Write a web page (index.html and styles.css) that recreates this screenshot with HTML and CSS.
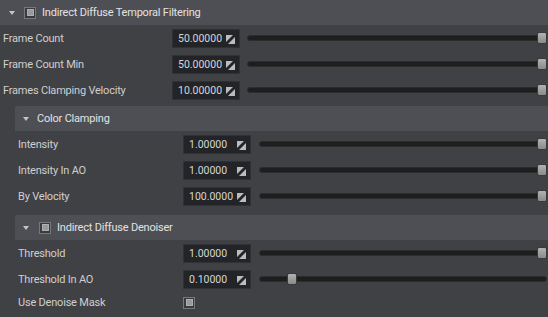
FILE: index.html
```html
<!DOCTYPE html>
<html>
<head>
<meta charset="utf-8">
<link rel="stylesheet" href="styles.css">
</head>
<body>
<div class="panel">
  <div class="hdr top">
    <span class="arrow"></span><span class="cb"><span class="cb-in"></span></span><span class="title">Indirect Diffuse Temporal Filtering</span>
  </div>
  <div class="row">
    <span class="lbl">Frame Count</span>
    <div class="num"><span class="val">50.000000</span><svg class="spin" viewBox="0 0 9 9" width="9" height="9"><path d="M0 0H7L0 7Z" fill="#bcbcbc"/><path d="M9 2V9H2Z" fill="#bcbcbc"/></svg></div>
    <div class="slider"><div class="track"></div><div class="handle" style="--v:1"></div></div>
  </div>
  <div class="row">
    <span class="lbl">Frame Count Min</span>
    <div class="num"><span class="val">50.000000</span><svg class="spin" viewBox="0 0 9 9" width="9" height="9"><path d="M0 0H7L0 7Z" fill="#bcbcbc"/><path d="M9 2V9H2Z" fill="#bcbcbc"/></svg></div>
    <div class="slider"><div class="track"></div><div class="handle" style="--v:1"></div></div>
  </div>
  <div class="row">
    <span class="lbl">Frames Clamping Velocity</span>
    <div class="num"><span class="val">10.000000</span><svg class="spin" viewBox="0 0 9 9" width="9" height="9"><path d="M0 0H7L0 7Z" fill="#bcbcbc"/><path d="M9 2V9H2Z" fill="#bcbcbc"/></svg></div>
    <div class="slider"><div class="track"></div><div class="handle" style="--v:1"></div></div>
  </div>

  <div class="group first">
    <div class="hdr sub">
      <span class="arrow"></span><span class="title">Color Clamping</span>
    </div>
    <div class="row">
      <span class="lbl">Intensity</span>
      <div class="num"><span class="val">1.00000</span><svg class="spin" viewBox="0 0 9 9" width="9" height="9"><path d="M0 0H7L0 7Z" fill="#bcbcbc"/><path d="M9 2V9H2Z" fill="#bcbcbc"/></svg></div>
      <div class="slider"><div class="track"></div><div class="handle" style="--v:1"></div></div>
    </div>
    <div class="row">
      <span class="lbl">Intensity In AO</span>
      <div class="num"><span class="val">1.00000</span><svg class="spin" viewBox="0 0 9 9" width="9" height="9"><path d="M0 0H7L0 7Z" fill="#bcbcbc"/><path d="M9 2V9H2Z" fill="#bcbcbc"/></svg></div>
      <div class="slider"><div class="track"></div><div class="handle" style="--v:1"></div></div>
    </div>
    <div class="row">
      <span class="lbl">By Velocity</span>
      <div class="num"><span class="val">100.00000</span><svg class="spin" viewBox="0 0 9 9" width="9" height="9"><path d="M0 0H7L0 7Z" fill="#bcbcbc"/><path d="M9 2V9H2Z" fill="#bcbcbc"/></svg></div>
      <div class="slider"><div class="track"></div><div class="handle" style="--v:1"></div></div>
    </div>
  </div>

  <div class="group">
    <div class="hdr sub">
      <span class="arrow"></span><span class="cb"><span class="cb-in"></span></span><span class="title">Indirect Diffuse Denoiser</span>
    </div>
    <div class="row">
      <span class="lbl">Threshold</span>
      <div class="num"><span class="val">1.00000</span><svg class="spin" viewBox="0 0 9 9" width="9" height="9"><path d="M0 0H7L0 7Z" fill="#bcbcbc"/><path d="M9 2V9H2Z" fill="#bcbcbc"/></svg></div>
      <div class="slider"><div class="track"></div><div class="handle" style="--v:1"></div></div>
    </div>
    <div class="row">
      <span class="lbl">Threshold In AO</span>
      <div class="num"><span class="val">0.10000</span><svg class="spin" viewBox="0 0 9 9" width="9" height="9"><path d="M0 0H7L0 7Z" fill="#bcbcbc"/><path d="M9 2V9H2Z" fill="#bcbcbc"/></svg></div>
      <div class="slider"><div class="track"></div><div class="handle" style="--v:0.1"></div></div>
    </div>
    <div class="row short">
      <span class="lbl">Use Denoise Mask</span>
      <span class="cb"><span class="cb-in"></span></span>
    </div>
  </div>
</div>
</body>
</html>
```

FILE: styles.css
```css
html, body {
  margin: 0;
  padding: 0;
  background: #404145;
  width: 548px;
  height: 317px;
  overflow: hidden;
}
.panel {
  font-family: Roboto, "Liberation Sans", sans-serif;
  font-size: 11px;
  letter-spacing: -0.2px;
  color: #cfcfcf;
}
.hdr {
  display: flex;
  align-items: center;
  height: 25px;
  background: #4e4f54;
  color: #e2e2e2;
}
.hdr.top {
  padding-left: 9px;
}
.hdr.top .arrow { margin-right: 9px; }
.hdr.top .cb { margin-right: 6px; }
.hdr.sub {
  margin-left: 15px;
  padding-left: 8px;
  border-radius: 2px 0 0 0;
}
.hdr.sub .arrow { margin-right: 8px; }
.hdr.sub .arrow + .cb { margin-left: 2px; margin-right: 6px; }
.arrow {
  width: 0;
  height: 0;
  border-left: 3.5px solid transparent;
  border-right: 3.5px solid transparent;
  border-top: 4px solid #c4c4c4;
  flex: none;
}
.cb {
  box-sizing: border-box;
  width: 12px;
  height: 12px;
  border: 1px solid #77787b;
  background: #3a3b3f;
  display: flex;
  align-items: center;
  justify-content: center;
  flex: none;
}
.cb-in {
  box-sizing: border-box;
  width: 7px;
  height: 7px;
  background: #999a9c;
  border: 1px solid #aeafb1;
}
.row {
  display: flex;
  align-items: center;
  height: 26px;
  padding-left: 3px;
  padding-right: 1px;
}
.lbl {
  width: 169px;
  flex: none;
  white-space: nowrap;
}
.group { margin-top: 6px; }
.group.first { margin-top: 3px; }
.group .row { padding-left: 18px; }
.group .lbl { width: 165px; }
.row.short { height: 21px; }
.num {
  box-sizing: border-box;
  width: 68px;
  height: 19px;
  flex: none;
  background: #232428;
  border: 1px solid #303135;
  display: flex;
  align-items: center;
  padding-left: 5px;
  padding-right: 4px;
  color: #d6d6d6;
}
.val {
  width: 44px;
  overflow: hidden;
  white-space: nowrap;
  flex: none;
  font-size: 10.5px;
  letter-spacing: 0;
}
.spin {
  margin-left: auto;
  margin-top: 2px;
  flex: none;
}
.slider {
  flex: 1;
  position: relative;
  height: 12px;
  margin-left: 7px;
  display: flex;
  align-items: center;
}
.group .slider { margin-left: 8px; }
.track {
  box-sizing: border-box;
  width: 100%;
  height: 6px;
  border-radius: 3px;
  background: #1e1e1f;
  border: 1px solid #2b2c2e;
}
.handle {
  position: absolute;
  top: 0;
  box-sizing: border-box;
  width: 10px;
  height: 12px;
  left: calc((100% - 10px) * var(--v));
  border-radius: 2px;
  border: 1px solid #3a3a3c;
  background: linear-gradient(#b2b2b2, #8a8a8a);
}
```
